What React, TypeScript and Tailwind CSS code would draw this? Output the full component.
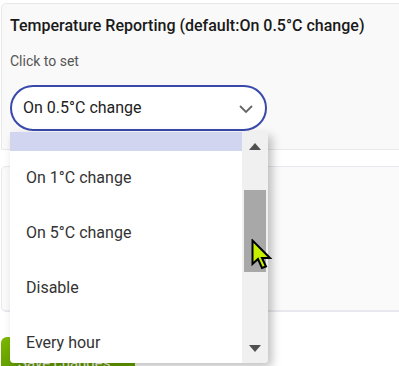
import React from "react";

function Cursor() {
  return (
    <svg
      className="absolute left-[251px] top-[239px]"
      width="24"
      height="32"
      viewBox="0 0 24 32"
    >
      <path
        d="M1.5 1.5 L1.5 25 L7 20 L11 29 L15 27.5 L11 19 L19 19 Z"
        fill="#c4f000"
        stroke="#000"
        strokeWidth="2"
        strokeLinejoin="miter"
      />
    </svg>
  );
}

export default function App() {
  const items = ["On 1°C change", "On 5°C change", "Disable", "Every hour"];
  return (
    <div
      className="relative w-[399px] h-[366px] overflow-hidden bg-white pt-[3px] pl-[1px]"
      style={{ fontFamily: "Roboto, 'Liberation Sans', sans-serif" }}
    >
      {/* Card 1 */}
      <div className="h-[147px] w-[420px] rounded-tl-[5px] border border-[#e8e8e8] bg-[#f9f9f9] px-[8px] pt-[12px]">
        <div className="text-[16px] leading-[20px] font-medium text-[#1a1a1a]">
          Temperature Reporting (default:On 0.5°C change)
        </div>
        <div className="mt-[15px] text-[14px] leading-[20px] text-[#555]">Click to set</div>
        <div className="mt-[14px] flex h-[46px] w-[257px] items-center justify-between rounded-full border-2 border-[#3949ab] bg-white pl-[11px] pr-[12px]">
          <span className="text-[16px] text-[#222]">On 0.5°C change</span>
          <svg width="14" height="8" viewBox="0 0 14 8" className="mt-[2px]">
            <path d="M1 1 L7 7 L13 1" fill="none" stroke="#666" strokeWidth="1.8" />
          </svg>
        </div>
      </div>

      {/* Card 2 */}
      <div className="mt-[16px] h-[146px] w-[420px] rounded-l-[5px] border border-[#e8e8ee] border-b-2 bg-[#fafafa]" />

      {/* Save button */}
      <div className="mt-[25px] flex h-[40px] w-[134px] items-start rounded-tl-[6px] bg-gradient-to-b from-[#7cb800] to-[#5e9800] pl-[17px] pt-[15px] text-[15px] text-white">
        Save changes
      </div>

      {/* Dropdown list */}
      <div className="absolute left-[10px] top-[132px] flex h-[231px] w-[258px] overflow-hidden rounded-b-[4px] bg-white shadow-[4px_4px_10px_rgba(0,0,0,0.25)]">
        <div className="flex w-[232px] flex-col">
          <div className="h-[19px] shrink-0 bg-[#d1d5ef]" />
          {items.map((t) => (
            <div
              key={t}
              className="flex h-[55px] shrink-0 items-center pb-[2px] pl-[16px] text-[16px] text-[#333]"
            >
              {t}
            </div>
          ))}
        </div>
        <div className="relative w-[26px] bg-[#f0f0f0]">
          <svg className="absolute left-[7px] top-[11px]" width="12" height="7" viewBox="0 0 12 7">
            <path d="M0 7 L6 0 L12 7 Z" fill="#505050" />
          </svg>
          <div className="absolute left-[2px] top-[58px] h-[82px] w-[22px] bg-[#a8a8a8]" />
          <svg className="absolute left-[7px] top-[213px]" width="12" height="7" viewBox="0 0 12 7">
            <path d="M0 0 L12 0 L6 7 Z" fill="#505050" />
          </svg>
        </div>
      </div>

      <Cursor />
    </div>
  );
}
